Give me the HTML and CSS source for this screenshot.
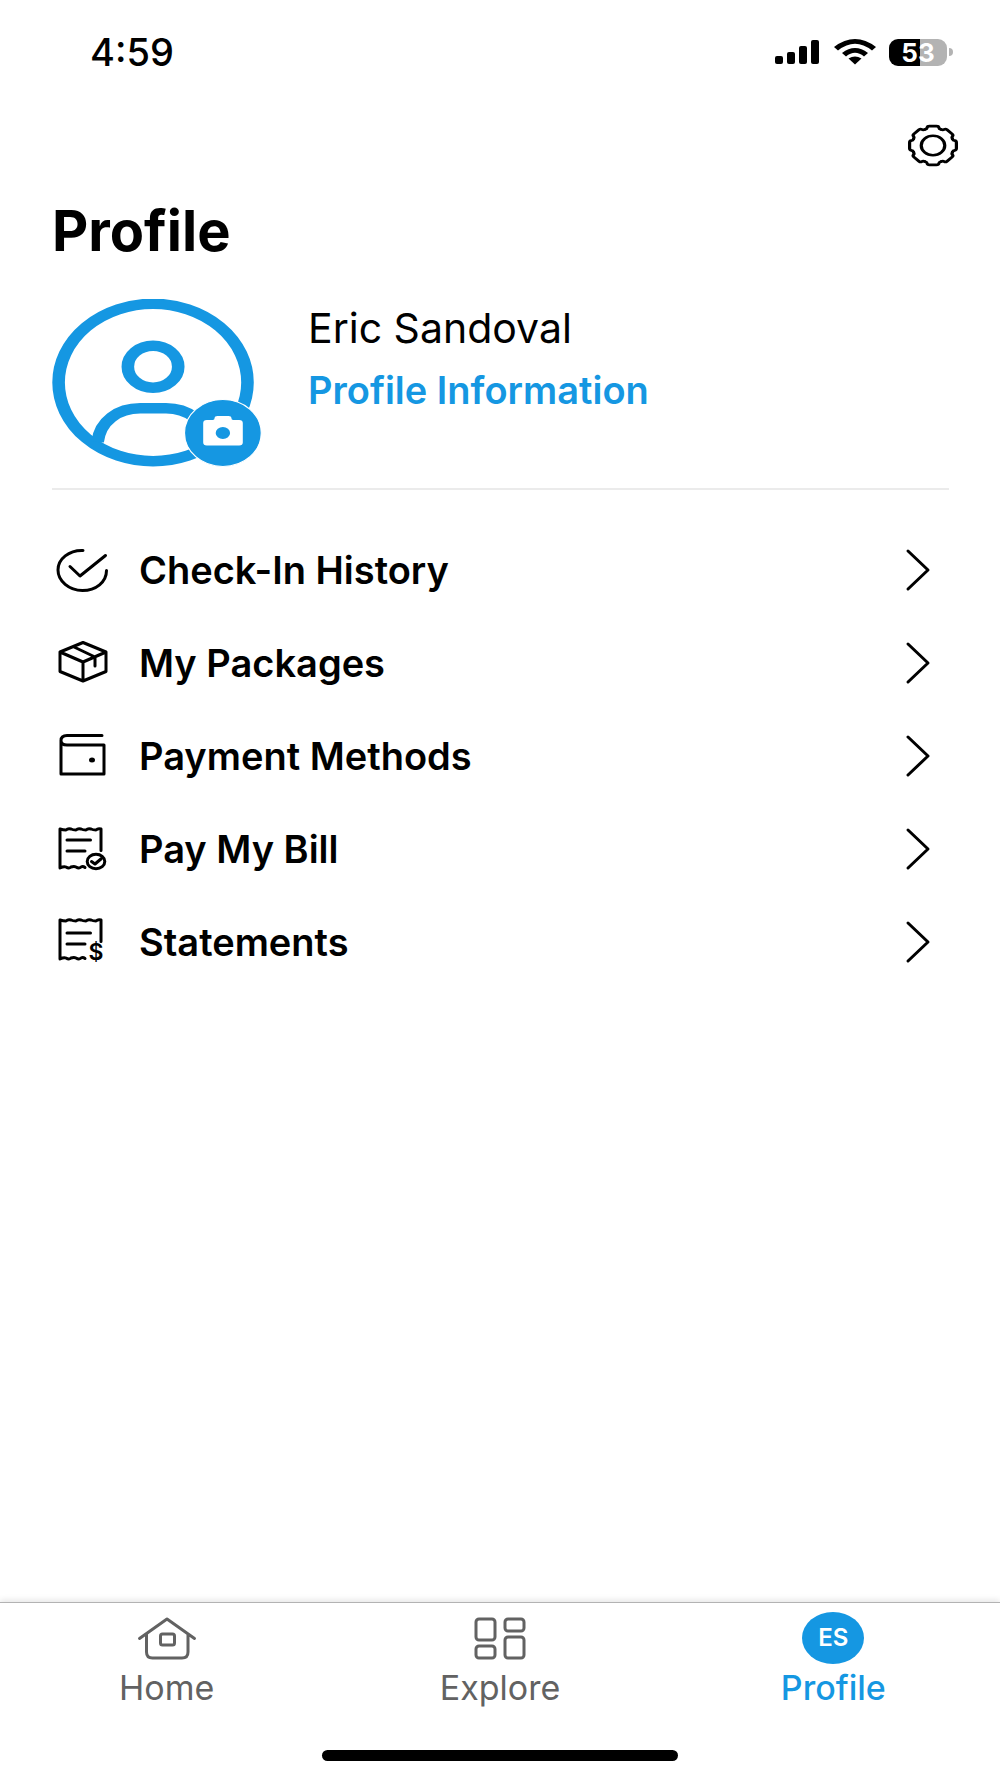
FILE: index.html
```html
<!DOCTYPE html>
<html lang="en">
<head>
<meta charset="utf-8">
<meta name="viewport" content="width=device-width, initial-scale=1">
<title>Profile</title>
<link rel="stylesheet" href="styles.css">
</head>
<body>
<div class="app">
  <header class="status">
    <time class="clock">4:59</time>
    <div class="indicators">
      <svg width="46" height="26" viewBox="0 0 46 26" aria-hidden="true">
        <rect x="0" y="17" width="8" height="8" rx="2"/><rect x="12" y="13" width="8" height="12" rx="2"/><rect x="24" y="7" width="8" height="18" rx="2"/><rect x="36" y="1" width="8" height="24" rx="2"/>
      </svg>
      <svg width="42" height="26" viewBox="0 0 42 26" aria-hidden="true">
        <path d="M0 8Q21-8 42 8L38 11.500Q21-2 4 11.500Z"/><path d="M8 14Q21 4 34 14L30 17.500Q21 10 12 17.500Z"/><path d="M14.500 19.500Q21 15.500 27.500 19.500L21 25.500Z"/>
      </svg>
      <div class="power"><span class="battery">53</span><span class="nub"></span></div>
    </div>
  </header>

  <main class="content">
    <button class="settings" type="button" aria-label="Settings">
      <svg width="52" height="43" viewBox="-21 -21 42 42" preserveAspectRatio="none" fill="none" stroke="#000" stroke-width="2.600" stroke-linecap="round" stroke-linejoin="round">
        <defs><path id="tooth" d="M-6.500-15.700Q-4.900-16.200-4.700-17.600Q-4.500-18.900-2.800-18.900H2.800Q4.500-18.900 4.700-17.600Q4.900-16.200 6.500-15.700"/></defs>
        <use href="#tooth"/><use href="#tooth" transform="rotate(45)"/><use href="#tooth" transform="rotate(90)"/><use href="#tooth" transform="rotate(135)"/><use href="#tooth" transform="rotate(180)"/><use href="#tooth" transform="rotate(225)"/><use href="#tooth" transform="rotate(270)"/><use href="#tooth" transform="rotate(315)"/>
        <circle r="9.500"/>
      </svg>
    </button>
    <h1 class="title">Profile</h1>

    <section class="person">
      <button class="avatar" type="button" aria-label="Change profile photo">
        <svg width="210" height="169" viewBox="0 0 175 169" preserveAspectRatio="none">
          <g fill="none" stroke="#1597e2" stroke-width="10.500">
            <circle cx="84.200" cy="83.500" r="78.700"/>
            <circle cx="84.200" cy="67.700" r="21"/>
            <path d="M38 143C40 122 55 109.300 73.500 109.300H95C113 109.300 128 122 130.500 143"/>
          </g>
          <ellipse cx="142.400" cy="134" rx="32" ry="33.500" fill="#1597e2" stroke="#fff" stroke-width="1"/>
          <path fill="#fff" d="M129 121H134Q135.500 121 135.500 119Q135.500 117 138 117H147Q149.500 117 149.500 119Q149.500 121 151 121H156Q159 121 159 124V143.500Q159 146.500 156 146.500H129Q126 146.500 126 143.500V124Q126 121 129 121Z"/>
          <circle cx="142.400" cy="134" r="6" fill="#1597e2"/>
        </svg>
      </button>
      <div class="identity">
        <p class="name">Eric Sandoval</p>
        <a class="info" href="#info">Profile Information</a>
      </div>
    </section>

    <nav class="menu" aria-label="Account">
      <a class="row" href="#check-in">
        <svg class="icon" viewBox="0 0 60 49"><path d="M31 5.500C17 5 6 14 6 25S17 45.500 30.500 45.500S54.500 37 54.500 25.500M18 21.500L28 31L53.500 10.500"/></svg>
        <span class="label">Check-In History</span>
        <svg class="chevron" viewBox="0 0 28 49"><path d="M4 6L24 25L4 44"/></svg>
      </a>
      <a class="row" href="#packages">
        <svg class="icon" viewBox="0 0 60 49"><path d="M31 4.500L54 14V33.500L31 43L8 33.500V14ZM8 14L31 24L54 14M31 24V43M21 8.500L43 19V28"/></svg>
        <span class="label">My Packages</span>
        <svg class="chevron" viewBox="0 0 28 49"><path d="M4 6L24 25L4 44"/></svg>
      </a>
      <a class="row" href="#payment">
        <svg class="icon" viewBox="0 0 60 49"><path d="M50 4.500H15Q9 4.500 9 9.500Q9 14 15 14H52V43H9V9"/><ellipse class="dot" cx="40" cy="29" rx="3" ry="2.500"/></svg>
        <span class="label">Payment Methods</span>
        <svg class="chevron" viewBox="0 0 28 49"><path d="M4 6L24 25L4 44"/></svg>
      </a>
      <a class="row" href="#bill">
        <svg class="icon" viewBox="0 0 60 49"><path d="M49 26.500V5Q46 4 44 6Q41 6 39 5Q36 4 34 6Q31 6 29 5Q26 4 24 6Q21 6 19 5Q16 4 14 6Q11 6 8 5V44Q12 42 14 43Q17 45 19 43Q22 42 24 43Q27 45 29 43Q31 42 33 43.500M15 16H38.500M15 27H33"/><ellipse cx="44" cy="37.500" rx="8.800" ry="7.300"/><path d="M39.500 37.500L43 40L49.500 34.500"/></svg>
        <span class="label">Pay My Bill</span>
        <svg class="chevron" viewBox="0 0 28 49"><path d="M4 6L24 25L4 44"/></svg>
      </a>
      <a class="row" href="#statements">
        <svg class="icon" viewBox="0 0 60 49"><path d="M49 24.500V3Q46 2 44 4Q41 4 39 3Q36 2 34 4Q31 4 29 3Q26 2 24 4Q21 4 19 3Q16 2 14 4Q11 4 8 3V42Q12 40 14 41Q17 43 19 41Q22 40 24 41Q27 43 29 41Q31 40 33 41.500M15 16H38.500M15 27H33"/><text x="44" y="43" text-anchor="middle">$</text></svg>
        <span class="label">Statements</span>
        <svg class="chevron" viewBox="0 0 28 49"><path d="M4 6L24 25L4 44"/></svg>
      </a>
    </nav>
  </main>

  <footer class="dock">
    <nav class="tabs" aria-label="Main">
      <a class="tab" href="#home">
        <svg class="tab-icon" viewBox="0 0 60 52"><path d="M2.500 26.500L30 7L57.500 26.500M9.500 22V40Q9.500 46 15.500 46H45Q51 46 51 40V22"/><rect x="23.500" y="22" width="14" height="11" rx="2"/></svg>
        <span>Home</span>
      </a>
      <a class="tab" href="#explore">
        <svg class="tab-icon" viewBox="0 0 60 52"><rect x="6" y="7" width="19" height="21" rx="3"/><rect x="6" y="34" width="19" height="12" rx="3"/><rect x="35" y="7" width="19" height="12" rx="3"/><rect x="35" y="25" width="19" height="21" rx="3"/></svg>
        <span>Explore</span>
      </a>
      <a class="tab current" href="#profile" aria-current="page">
        <span class="initials">ES</span>
        <span>Profile</span>
      </a>
    </nav>
    <div class="home-bar"></div>
  </footer>
</div>
</body>
</html>
```

FILE: styles.css
```css
* { box-sizing: border-box; }

body {
  margin: 0;
  background: #fff;
  color: #000;
  font-family: Inter, "Liberation Sans", sans-serif;
}

a { color: inherit; text-decoration: none; }
button { padding: 0; border: 0; background: none; cursor: pointer; }
svg { display: block; flex: none; }

.app {
  display: flex;
  flex-direction: column;
  min-height: 100vh;
}

.status {
  display: flex;
  align-items: center;
  justify-content: space-between;
  height: 104px;
  padding: 0 47px 0 90px;
}
.clock { font-size: 38px; font-weight: 500; }
.indicators { display: flex; align-items: center; gap: 13px; }
.power { display: flex; align-items: center; gap: 2px; }
.battery {
  width: 58px;
  border-radius: 9px;
  background: linear-gradient(90deg, #000 53%, #b3b3b3 53%);
  color: #fff;
  font-size: 26px;
  font-weight: 700;
  line-height: 27px;
  text-align: center;
}
.nub {
  width: 4px;
  height: 8px;
  border-radius: 0 4px 4px 0;
  background: #b3b3b3;
}

.content {
  display: flex;
  flex: 1;
  flex-direction: column;
  padding: 20px 51px 32px 52px;
}
.settings { align-self: flex-end; margin-right: -10px; }
.title {
  margin: 32px 0 36px;
  font-size: 56px;
  font-weight: 700;
  line-height: 64px;
}

.person {
  display: flex;
  gap: 46px;
  padding-bottom: 20px;
  border-bottom: 2px solid #ebebeb;
}
.identity { padding-top: 5px; }
.name { margin: 0; font-size: 41px; line-height: 48px; }
.info {
  display: block;
  margin-top: 14px;
  color: #1597e2;
  font-size: 38px;
  font-weight: 600;
  line-height: 48px;
}

.menu { padding-top: 33px; }
.row { display: flex; align-items: center; height: 93px; padding-right: 17px; }
.icon, .chevron {
  height: 49px;
  fill: none;
  stroke: #000;
  stroke-width: 3;
  stroke-linecap: round;
  stroke-linejoin: round;
}
.icon { width: 60px; }
.icon .dot { fill: #000; stroke: none; }
.icon text { fill: #000; stroke: none; font-size: 23px; font-weight: 600; }
.chevron { width: 28px; }
.label { flex: 1; padding-left: 27px; font-size: 38px; font-weight: 600; }

.dock {
  border-top: 1px solid #b3b3b3;
  box-shadow: 0 -2px 6px rgba(0, 0, 0, .1);
  padding: 9px 0 17px;
}
.tabs { display: grid; grid-template-columns: repeat(3, 1fr); }
.tab {
  display: flex;
  flex-direction: column;
  align-items: center;
  color: #626262;
  font-size: 34px;
  line-height: 48px;
}
.tab-icon {
  width: 60px;
  height: 52px;
  fill: none;
  stroke: currentColor;
  stroke-width: 3;
  stroke-linecap: round;
  stroke-linejoin: round;
}
.current { color: #1597e2; font-weight: 500; }
.initials {
  width: 62px;
  height: 52px;
  border-radius: 50%;
  background: #1597e2;
  color: #fff;
  font-size: 24px;
  font-weight: 600;
  line-height: 52px;
  text-align: center;
}
.home-bar {
  width: 100%;
  max-width: 356px;
  height: 11px;
  margin: 38px auto 0;
  border-radius: 8px;
  background: #000;
}
```
